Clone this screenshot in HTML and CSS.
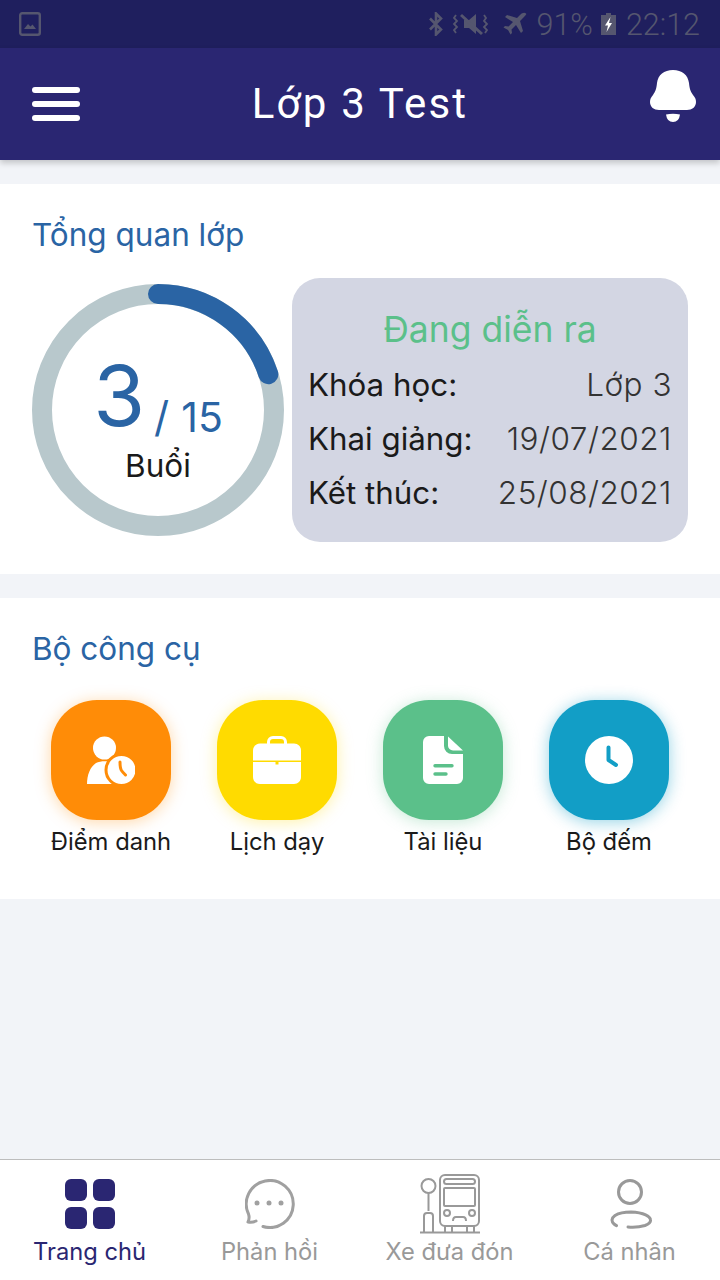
FILE: index.html
```html
<!DOCTYPE html>
<html lang="vi">
<head>
  <meta charset="UTF-8" />
  <meta name="viewport" content="width=device-width, initial-scale=1.0" />
  <title>Lớp 3 Test</title>
  <link rel="stylesheet" href="styles.css">
</head>
<body>
  <div class="app">
    <div class="statusbar">
      <svg class="st-pic" viewBox="0 0 22 24"><rect x="1.2" y="1.2" width="19.6" height="21.6" rx="2" fill="none" stroke="#55566f" stroke-width="2.4"/><path d="M5 17l4-5 2.500 2.500 2-2L17 17z" fill="#55566f"/></svg>
      <div class="st-right">
        <svg class="st-bt" viewBox="0 0 16 24"><path d="M2 6.500l11 11-5 5V1.500l5 5-11 11" fill="none" stroke="#55566f" stroke-width="2.600"/></svg>
        <svg class="st-mute" viewBox="0 0 38 24"><path d="M12 8h5l7-6v20l-7-6h-5z" fill="#55566f"/><path d="M9 3l21 19" stroke="#55566f" stroke-width="3"/><path d="M4 3l-2 3 3 3-3 3 3 3-3 3 2 3M32 3l2 3-2 3 3 3-3 3 3 3-2 3" fill="none" stroke="#55566f" stroke-width="1.800"/></svg>
        <svg class="st-plane" viewBox="0 0 24 24"><path d="M23 1.500c-1.500-1.500-4-.5-5.500 1L14 6 4 3 2 5l8 5-4.500 4.500-3.500-.5L.5 15.500l4.500 2.500 2.500 4.500L9 21l-.5-3.500L13 13l5 8 2-2-3-10 3.500-3.500c1.500-1.500 3.500-3 2.500-4z" fill="#55566f"/></svg>
        <span class="st-text">91%</span>
        <svg class="st-batt" viewBox="0 0 15 22"><path d="M5 0h5v2h5v20H0V2h5z" fill="#55566f"/><path d="M9.500 4L4 12.500h3L5.500 19 11 10H8z" fill="#fff"/></svg>
        <span class="st-text">22:12</span>
      </div>
    </div>

    <header class="topbar">
      <div class="menu"><span></span><span></span><span></span></div>
      <h1>Lớp 3 Test</h1>
      <svg class="bell" viewBox="0 0 46 52"><path d="M23 0C32 0 38 5 39 13 39.500 19 41 22 43 25 45 27.500 46 29 46 32 46 37 42 40 37 40H9C4 40 0 37 0 32 0 29 1 27.500 3 25 5 22 6.500 19 7 13 8 5 14 0 23 0z" fill="#fff"/><path d="M16 44.500Q23 43 30 44.500 29 52 23 52 17 52 16 44.500z" fill="#fff"/></svg>
    </header>

    <main class="content">
      <section class="card overview">
        <h2>Tổng quan lớp</h2>
        <div class="overview-row">
          <div class="ring">
            <svg viewBox="0 0 252 252">
              <circle cx="126" cy="126" r="116" fill="none" stroke="#b8c8cc" stroke-width="20"/>
              <path d="M126 10A116 116 0 0 1 236.300 90.200" fill="none" stroke="#2a64a4" stroke-width="20" stroke-linecap="round"/>
            </svg>
            <div class="ring-text">
              <div class="count"><span class="now">3</span><span class="slash">/</span><span class="total">15</span></div>
              <div class="unit">Buổi</div>
            </div>
          </div>
          <div class="info">
            <div class="info-title">Đang diễn ra</div>
            <div class="info-row"><span>Khóa học:</span><span class="val">Lớp 3</span></div>
            <div class="info-row"><span>Khai giảng:</span><span class="val">19/07/2021</span></div>
            <div class="info-row"><span>Kết thúc:</span><span class="val">25/08/2021</span></div>
          </div>
        </div>
      </section>

      <section class="card tools">
        <h2>Bộ công cụ</h2>
        <div class="tool-grid">
          <div class="tool">
            <div class="tool-icon orange">
              <svg viewBox="0 0 48 48"><circle cx="17.500" cy="12" r="11.500" fill="#fff"/><path d="M0 48c0-9 3-17 9-21 3-1.500 8-2 12-1.500L30 48z" fill="#fff"/><circle cx="34.500" cy="34" r="15.500" fill="#fff" stroke="#ff8c07" stroke-width="3"/><path d="M33 26c0 3 0 6 1.500 8.500 1 1.500 2.500 3 4 4.500" fill="none" stroke="#ff8c07" stroke-width="3" stroke-linecap="round"/></svg>
            </div>
            <span>Điểm danh</span>
          </div>
          <div class="tool">
            <div class="tool-icon yellow">
              <svg viewBox="0 0 48 48"><path d="M15.500 8.500V6c0-2.500 2-4.500 4.500-4.500h8c2.500 0 4.500 2 4.500 4.500v2.500" fill="none" stroke="#fff" stroke-width="3"/><path d="M7 7.500h34c4 0 7 3 7 7v10H0v-10c0-4 3-7 7-7z" fill="#fff"/><path d="M0 26h22.500v2.500h3V26H48v15c0 4-3 7-7 7H7c-4 0-7-3-7-7z" fill="#fff"/></svg>
            </div>
            <span>Lịch dạy</span>
          </div>
          <div class="tool">
            <div class="tool-icon green">
              <svg class="doc" viewBox="0 0 40 48"><path d="M6 0h15v10a8 8 0 0 0 8 8h11v24a6 6 0 0 1-6 6H6a6 6 0 0 1-6-6V6a6 6 0 0 1 6-6z" fill="#fff"/><path d="M25 .5L40 14.500H30a5 5 0 0 1-5-5z" fill="#fff"/><path d="M12 29.700h17M12 38h11" stroke="#5bc08a" stroke-width="3.400" stroke-linecap="round"/></svg>
            </div>
            <span>Tài liệu</span>
          </div>
          <div class="tool">
            <div class="tool-icon blue">
              <svg viewBox="0 0 48 48"><circle cx="24" cy="24" r="24" fill="#fff"/><path d="M23.500 11.500V24l7.500 5" fill="none" stroke="#129ec6" stroke-width="4" stroke-linecap="round" stroke-linejoin="round"/></svg>
            </div>
            <span>Bộ đếm</span>
          </div>
        </div>
      </section>
    </main>

    <nav class="tabbar">
      <div class="tab active">
        <svg viewBox="0 0 50 50"><rect width="22" height="22" rx="6" fill="#2a2672"/><rect x="28" width="22" height="22" rx="6" fill="#2a2672"/><rect y="28" width="22" height="22" rx="6" fill="#2a2672"/><rect x="28" y="28" width="22" height="22" rx="6" fill="#2a2672"/></svg>
        <span>Trang chủ</span>
      </div>
      <div class="tab">
        <svg viewBox="0 0 50 50"><path d="M18 47.500A23.500 23.500 0 1 0 3.500 35c.8 2.500.8 5.500-.5 8 3 .6 5.500.2 8-1" fill="none" stroke="#a0a0a0" stroke-width="3" stroke-linecap="round" stroke-linejoin="round"/><circle cx="12" cy="24" r="2.500" fill="#a0a0a0"/><circle cx="24" cy="24" r="2.500" fill="#a0a0a0"/><circle cx="36" cy="24" r="2.500" fill="#a0a0a0"/></svg>
        <span>Phản hồi</span>
      </div>
      <div class="tab">
        <svg class="bus" viewBox="0 0 60 60"><g fill="none" stroke="#999" stroke-width="2"><circle cx="8.500" cy="12" r="7"/><path d="M8.500 19v18M4 58V42a3 3 0 0 1 3-3h3a3 3 0 0 1 3 3v16M0 58.500h60"/><rect x="20" y="1" width="39" height="51" rx="5"/><rect x="24" y="5" width="31" height="5" rx="2.500"/><rect x="24" y="14" width="31" height="18" rx="1"/><circle cx="27" cy="39" r="3"/><circle cx="52" cy="39" r="3"/><path d="M33 47c0-2 1-4 3-4h7c2 0 3 2 3 4M25 52v6M32 52v6M47 52v6M54 52v6"/></g></svg>
        <span>Xe đưa đón</span>
      </div>
      <div class="tab">
        <svg viewBox="0 0 50 50"><g fill="none" stroke="#999" stroke-width="3" stroke-linecap="round"><circle cx="25" cy="13" r="11.500"/><path d="M23 48c6 .5 12 0 17-1.500 4-1.500 6-3.500 5.500-6-.5-3-6-7-19.500-7.500-5.500 0-12 1-16 3.500-3.500 2.500-4 6-1 8.500.8.700 1.500 1.200 2.500 1.700"/></g></svg>
        <span>Cá nhân</span>
      </div>
    </nav>
  </div>
</body>
</html>
```

FILE: styles.css
```css
* {
  box-sizing: border-box;
}
body {
  margin: 0;
  font-family: 'Inter', sans-serif;
  background: #f2f4f8;
}
.app {
  width: 720px;
  height: 1280px;
  display: flex;
  flex-direction: column;
  overflow: hidden;
}
.statusbar {
  height: 48px;
  background: #1f1f5e;
  padding: 0 20px 0 19px;
  display: flex;
  align-items: center;
  justify-content: space-between;
  flex-shrink: 0;
}
.st-pic {
  width: 22px;
  height: 24px;
}
.st-right {
  display: flex;
  align-items: center;
  gap: 8px;
}
.st-bt {
  width: 16px;
  height: 24px;
}
.st-mute {
  width: 38px;
  height: 24px;
}
.st-plane {
  width: 24px;
  height: 24px;
  margin: 0 2px 0 5px;
}
.st-batt {
  width: 15px;
  height: 22px;
  margin-right: 2px;
}
.st-text {
  font-family: 'Roboto', sans-serif;
  font-size: 30.5px;
  font-weight: 300;
  color: #55566f;
}
.topbar {
  height: 112px;
  background: #2a2672;
  padding: 0 24px 2px;
  display: grid;
  grid-template-columns: 1fr auto 1fr;
  align-items: center;
  flex-shrink: 0;
  box-shadow: 0 3px 6px rgba(0, 0, 0, 0.2);
  position: relative;
}
.menu {
  width: 48px;
  margin: 2px 0 0 8px;
  display: flex;
  flex-direction: column;
  gap: 8px;
}
.menu span {
  height: 6px;
  border-radius: 3px;
  background: #ffffff;
}
.topbar h1 {
  margin: 0;
  font-family: 'Roboto', sans-serif;
  font-size: 42px;
  font-weight: 400;
  letter-spacing: 2.2px;
  color: #ffffff;
}
.bell {
  width: 46px;
  height: 52px;
  margin-bottom: 14px;
  justify-self: end;
}
.content {
  flex: 1;
  padding-top: 24px;
}
.card {
  background: #ffffff;
  margin-bottom: 24px;
}
.card h2 {
  margin: 0;
  font-size: 31.5px;
  font-weight: 400;
  line-height: 36px;
  color: #2a64a4;
}
.overview {
  height: 390px;
  padding: 33px 32px 0;
}
.overview-row {
  margin-top: 25px;
  display: flex;
  align-items: center;
  gap: 8px;
}
.ring {
  width: 252px;
  height: 252px;
  display: grid;
  flex-shrink: 0;
}
.ring svg,
.ring-text {
  grid-area: 1 / 1;
}
.ring svg {
  width: 252px;
  height: 252px;
}
.ring-text {
  display: flex;
  flex-direction: column;
  align-items: center;
  justify-content: center;
  padding-top: 18px;
}
.count {
  display: flex;
  align-items: flex-end;
  color: #2a64a4;
  line-height: 1;
}
.now {
  font-size: 84px;
  line-height: 84px;
}
.slash {
  font-size: 42px;
  margin: 0 12px 0 9px;
}
.total {
  font-size: 41px;
}
.unit {
  margin-top: 10px;
  font-size: 31.5px;
  line-height: 36px;
  color: #1a1a1a;
}
.info {
  width: 396px;
  height: 264px;
  background: #d3d6e3;
  border-radius: 28px;
  padding: 30px 16px 0;
}
.info-title {
  font-size: 35.5px;
  line-height: 44px;
  color: #5bc08a;
  text-align: center;
  margin-bottom: 10px;
}
.info-row {
  display: flex;
  justify-content: space-between;
  height: 54px;
  font-size: 31.3px;
  line-height: 46px;
  color: #1a1a1a;
}
.info-row .val {
  color: #333333;
  font-weight: 300;
  font-size: 31.5px;
  letter-spacing: 0.5px;
}
.tools {
  height: 301px;
  padding: 33px 28px 0 32px;
}
.tool-grid {
  margin: 33px 0 0 -4px;
  display: grid;
  grid-template-columns: repeat(4, 166px);
}
.tool {
  display: flex;
  flex-direction: column;
  align-items: center;
  font-size: 23.8px;
  line-height: 44px;
  color: #1a1a1a;
}
.tool-icon {
  width: 120px;
  height: 120px;
  border-radius: 46px;
  display: flex;
  align-items: center;
  justify-content: center;
}
.tool-icon svg {
  width: 48px;
  height: 48px;
}
.tool-icon svg.doc {
  width: 40px;
}
.orange {
  background: #ff8c07;
  box-shadow: 0 2px 16px rgba(255, 140, 7, 0.35);
}
.yellow {
  background: #ffdb00;
  box-shadow: 0 2px 16px rgba(255, 219, 0, 0.35);
}
.green {
  background: #5bc08a;
  box-shadow: 0 2px 16px rgba(91, 192, 138, 0.35);
}
.blue {
  background: #129ec6;
  box-shadow: 0 2px 16px rgba(18, 158, 198, 0.45);
}
.tabbar {
  height: 121px;
  background: #ffffff;
  border-top: 1px solid #bdbdbd;
  display: grid;
  grid-template-columns: repeat(4, 180px);
  flex-shrink: 0;
}
.tab {
  display: flex;
  flex-direction: column;
  align-items: center;
  padding: 19px 1px 0 0;
  font-size: 23.7px;
  line-height: 32px;
  color: #999999;
}
.tab svg {
  width: 50px;
  height: 50px;
  margin-bottom: 7px;
}
.tab svg.bus {
  width: 60px;
  height: 60px;
  margin: -5px 0 2px;
}
.tab.active {
  color: #2a2672;
}
```
